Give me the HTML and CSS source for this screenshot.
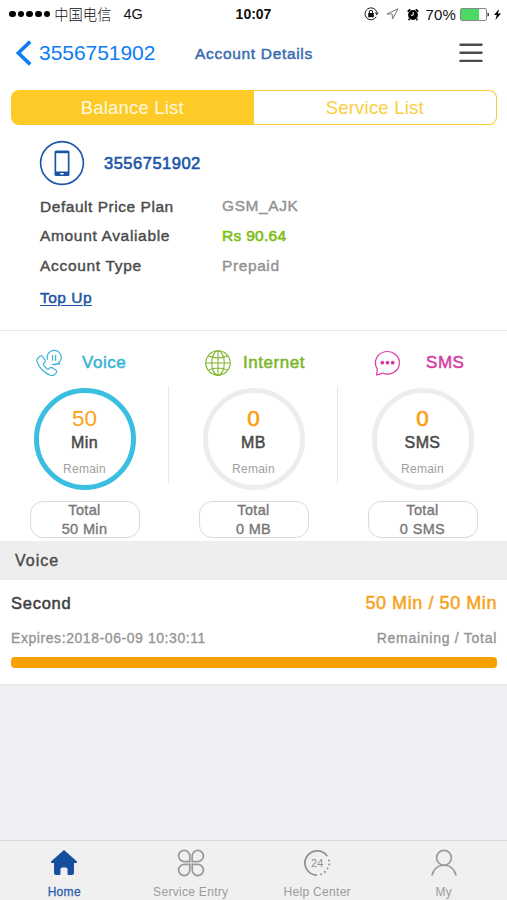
FILE: index.html
```html
<!DOCTYPE html>
<html lang="en">
<head>
<meta charset="utf-8">
<title>Account Details</title>
<link rel="stylesheet" href="styles.css">
</head>
<body>
<div class="app">
  <header class="status">
    <div class="status-left">
      <span class="signal"><i></i><i></i><i></i><i></i><i></i></span>
      <span class="carrier">中国电信</span>
      <span class="network">4G</span>
    </div>
    <span class="clock">10:07</span>
    <div class="status-right">
      <svg class="lock" width="15" height="14" viewBox="0 0 15 14"><path d="M12.2 9.800A6 6 0 1 1 12.700 5" fill="none" stroke="#222" stroke-width="1"/><path d="M10.800 5.600h3.800l-1.900 2.600z" fill="#222"/><rect x="4.200" y="6" width="5.600" height="4.200" fill="#111"/><path d="M5.300 6V5a1.700 1.700 0 0 1 3.400 0v1" fill="none" stroke="#111" stroke-width="1"/></svg>
      <svg class="location" width="13" height="12" viewBox="0 0 13 12"><path d="M12 .8 1 6h5.200l.3 5z" fill="none" stroke="#777" stroke-width="1" stroke-linejoin="round"/></svg>
      <svg class="alarm" width="12" height="13" viewBox="0 0 12 13"><circle cx="6" cy="7" r="4.900"/><path d="M.7 3.700 3.300 1.300M11.300 3.700 8.700 1.300M2.600 11l-1 1M9.400 11l1 1" stroke="#000" stroke-width="1.800"/><path d="M6.200 4v3.200H3.800" fill="none" stroke="#fff" stroke-width="1"/></svg>
      <span class="percent">70%</span>
      <svg class="battery" width="31" height="13" viewBox="0 0 31 13"><rect x=".5" y=".5" width="26" height="12" rx="1.500" fill="#fff" stroke="#888"/><rect x="1" y="1" width="18" height="11" fill="#4cd964"/><path d="M27.500 4.200q3.500 2.300 0 4.600z" fill="#333"/></svg>
      <svg class="bolt" width="7" height="11" viewBox="0 0 7 11"><path d="M5 0 0 6h2.800L1.400 11 7 4.600H4z"/></svg>
    </div>
  </header>

  <nav class="nav">
    <a class="back"><svg width="16" height="26" viewBox="0 0 16 26"><path d="M14.200 1.600 2.300 13l11.900 11.400" fill="none" stroke="#0d7cf5" stroke-width="3.600"/></svg><span>3556751902</span></a>
    <h1 class="title">Account Details</h1>
    <svg class="menu" width="24" height="20" viewBox="0 0 24 20"><path d="M1.500 1.700h21M1.500 9.800h21M1.500 17.900h21" stroke="#4c4c4c" stroke-width="2.400" stroke-linecap="round"/></svg>
  </nav>

  <div class="segment">
    <span class="seg active">Balance List</span>
    <span class="seg">Service List</span>
  </div>

  <section class="account">
    <div class="number-row">
      <svg width="46" height="46" viewBox="0 0 46 46"><circle cx="23" cy="23" r="21.400" fill="none" stroke="#1c55a5" stroke-width="1.600"/><rect x="15.500" y="10.500" width="15" height="25.500" rx="1.500" fill="#1c55a5"/><rect x="17.200" y="13.200" width="11.600" height="18.300" fill="#fff"/><rect x="21.200" y="33" width="3.600" height="1.600" rx=".8" fill="#fff"/></svg>
      <strong class="number">3556751902</strong>
    </div>
    <div class="row plan"><span class="label l1">Default Price Plan</span><span class="value v1">GSM_AJK</span></div>
    <div class="row amount"><span class="label l2">Amount Avaliable</span><span class="value v2">Rs 90.64</span></div>
    <div class="row type"><span class="label l3">Account Type</span><span class="value v3">Prepaid</span></div>
    <div class="row top"><a class="topup">Top Up</a></div>
  </section>

  <section class="usage">
    <article class="meter voice">
      <h2 class="heading"><svg width="28" height="28" viewBox="0 0 28 28" fill="none" stroke="#36b4d2" stroke-width="1.150" stroke-linejoin="round" stroke-linecap="round"><path d="M2.700 9.200 5.300 7q1.200-.7 2.100.4l2.700 3.800q.7 1.200-.3 2.100l-1.300 1.200q-.5.800.1 1.700 1.600 2.200 3.700 3.700.9.500 1.600-.1l1.300-1.100q1-.7 2.100 0l3.800 2.700q1.200 1 .3 2.200l-1.900 2.100q-1.700 1.300-4.100.6C9.700 24 4.500 19 2.200 13.300q-.8-2.600.500-4.100z"/><path d="M12.300 10.300a7.100 7.100 0 1 1 5.200 5.100M20 14.900q2.100.2 4.600.1-.7-.9-.8-2.100"/><path d="M17.600 6.300v5M20.600 6.300v5"/></svg><span>Voice</span></h2>
      <div class="ring"><span class="amount-left">50</span><span class="unit">Min</span><span class="remain">Remain</span></div>
      <div class="total"><span>Total</span><span>50 Min</span></div>
    </article>
    <article class="meter internet">
      <h2 class="heading"><svg width="28" height="28" viewBox="0 0 28 28" fill="none" stroke="#7bb52a" stroke-width="1.100"><circle cx="14" cy="14" r="12.200"/><ellipse cx="14" cy="14" rx="6.300" ry="12.200"/><path d="M14 1.800v24.400M1.800 14h24.400M4.200 6.800q9.800 4.400 19.600 0M4.200 21.200q9.800-4.400 19.600 0"/></svg><span>Internet</span></h2>
      <div class="ring"><span class="amount-left">0</span><span class="unit">MB</span><span class="remain">Remain</span></div>
      <div class="total"><span>Total</span><span>0 MB</span></div>
    </article>
    <article class="meter sms">
      <h2 class="heading"><svg width="28" height="28" viewBox="0 0 28 28" fill="none" stroke="#d93aa5" stroke-width="1.200" stroke-linejoin="round"><path d="M4.100 19.600A12 11.300 0 1 1 9.200 24Q6.500 25.700 3.400 26 4.600 22.600 4.100 19.600z"/><g fill="#d93aa5" stroke="none"><circle cx="9.300" cy="13.700" r="1.900"/><circle cx="14.500" cy="13.700" r="1.900"/><circle cx="19.700" cy="13.700" r="1.900"/></g></svg><span>SMS</span></h2>
      <div class="ring"><span class="amount-left">0</span><span class="unit">SMS</span><span class="remain">Remain</span></div>
      <div class="total"><span>Total</span><span>0 SMS</span></div>
    </article>
  </section>

  <h3 class="group">Voice</h3>
  <section class="detail">
    <div class="line main"><span class="name">Second</span><span class="quota">50 Min / 50 Min</span></div>
    <div class="line sub"><span class="expires">Expires:2018-06-09 10:30:11</span><span class="legend">Remaining / Total</span></div>
    <div class="bar"></div>
  </section>

  <footer class="tabs">
    <a class="tab on"><svg width="28" height="28" viewBox="0 0 28 28"><path d="M14 1 27 12.600Q27.600 14 26 14H24v10q0 2-2 2h-3.300q-1.200 0-1.200-1.200V20q0-1.500-1.500-1.500h-4q-1.500 0-1.500 1.500v4.800q0 1.200-1.200 1.200H6q-2 0-2-2V14H2Q.4 14 1 12.600z" fill="#164f9f"/></svg><span>Home</span></a>
    <a class="tab entry"><svg width="28" height="28" viewBox="0 0 28 28" fill="none" stroke="#999" stroke-width="1.700"><path d="M12.800 12.600H7.200A5.600 5.600 0 1 1 12.800 7z"/><path d="M15.200 12.600h5.600A5.600 5.600 0 1 0 15.200 7zM12.800 15.400H7.200A5.600 5.600 0 1 0 12.800 21zM15.200 15.400h5.600A5.600 5.600 0 1 1 15.200 21z"/></svg><span>Service Entry</span></a>
    <a class="tab help"><svg width="28" height="28" viewBox="0 0 28 28"><path d="M24.300 7.200A12.200 12.200 0 1 0 14 26.200" fill="none" stroke="#919191" stroke-width="1.800"/><path d="M26 11.500v.1M26.200 15.500v.1M24.600 19.500v.1M21.800 22.800v.1M18 25.200v.1" stroke="#919191" stroke-width="2" stroke-linecap="round"/><text x="14.200" y="18" text-anchor="middle" class="hours">24</text></svg><span>Help Center</span></a>
    <a class="tab my"><svg width="28" height="28" viewBox="0 0 28 28" fill="none" stroke="#999" stroke-width="1.600"><circle cx="14" cy="8.800" r="7.400"/><path d="M1.900 26.500C3.500 20 8 16.200 14 16.200S24.500 20 26.100 26.500"/></svg><span>My</span></a>
  </footer>
</div>
</body>
</html>
```
FILE: styles.css
```css
* { box-sizing: border-box; margin: 0; padding: 0; }
body { font-family: "Liberation Sans", "Noto Sans CJK SC", sans-serif; background: #efeff4; color: #4a4a4a; }
.app { width: 507px; height: 900px; display: flex; flex-direction: column; overflow: hidden; background: #efeff4; white-space: nowrap; }
h1, h2, h3, strong { font-weight: 400; }
svg { display: block; flex: none; }

.status { height: 28px; display: grid; grid-template-columns: 1fr auto 1fr; align-items: center; padding: 0 6px 0 9px; background: #fff; color: #111; }
.status-left, .status-right { display: flex; align-items: center; }
.signal { display: flex; gap: 2.200px; margin-right: 4px; }
.signal i { width: 6.500px; height: 6.500px; border-radius: 50%; background: #000; }
.carrier { font: 14.300px/20px "Noto Sans CJK SC", sans-serif; font-weight: 300; }
.network { font-size: 14.500px; margin-left: 12px; }
.clock { font-size: 14px; font-weight: 700; margin-right: 3px; }
.status-right { justify-content: flex-end; }
.location { margin-left: 7px; }
.alarm { margin-left: 8px; }
.percent { font-size: 15px; letter-spacing: .15px; margin: 0 4px 0 7px; }
.bolt { margin-left: 3px; }

.nav { height: 62px; display: grid; grid-template-columns: 195px 1fr 48px; align-items: center; padding-bottom: 13px; background: #fff; }
.back { display: flex; align-items: center; gap: 7px; padding-left: 16px; color: #0d7cf5; font-size: 21px; letter-spacing: -.05px; }
.title { font-size: 15.500px; color: #3a6cb0; -webkit-text-stroke: .5px; letter-spacing: .68px; padding-top: 3px; }

.segment { height: 49px; display: flex; padding: 0 10px 14px 11px; background: #fff; }
.seg { flex: 1; display: grid; place-items: center; font-size: 18.500px; color: #fbce3e; border: 1.500px solid #fbcb30; border-left: 0; border-radius: 0 8px 8px 0; letter-spacing: .2px; }
.seg.active { background: #fdca28; color: #fff9df; border: 0; border-radius: 8px 0 0 8px; }

.account { height: 192px; padding: 1px 0 0 39px; background: #fff; border-bottom: 1px solid #e6e6e6; font-size: 15.500px; -webkit-text-stroke: .4px; }
.number-row { display: flex; align-items: center; gap: 19px; height: 46px; color: #1c55a5; }
.number { font-size: 16.500px; letter-spacing: .5px; -webkit-text-stroke: .6px; }
.row { display: grid; grid-template-columns: 182px 1fr; padding-left: 1px; align-items: center; height: 30px; }
.plan { margin-top: 6px; height: 29px; }
.amount { height: 29px; }
.type { height: 31px; }
.top { height: 33px; }
.l1 { letter-spacing: .54px; }
.l2 { letter-spacing: .66px; }
.l3 { letter-spacing: .68px; }
.value { color: #929292; letter-spacing: .6px; }
.v1 { position: relative; top: -1px; }
.v2 { color: #80bd16; letter-spacing: .3px; -webkit-text-stroke: .6px; }
.topup { color: #1c55a5; text-decoration: underline; text-decoration-thickness: 1px; text-underline-offset: 2px; letter-spacing: .5px; -webkit-text-stroke: .5px; }

.usage { height: 210px; display: grid; grid-template-columns: repeat(3, 169px); background: #fff; }
.meter { display: flex; flex-direction: column; align-items: center; background: linear-gradient(#e9e9e9, #e9e9e9) right 55px / 1px 98px no-repeat; }
.sms { background: none; }
.heading { height: 57px; width: 169px; padding: 18px 0 0 35px; display: flex; align-items: flex-start; font-size: 17px; line-height: 20px; letter-spacing: .55px; -webkit-text-stroke: .5px; }
.heading svg { -webkit-text-stroke: 0; }
.heading span { padding-top: 4px; }
.voice .heading { color: #36b4d2; gap: 19px; }
.internet .heading { color: #7bb52a; gap: 11px; }
.sms .heading { color: #d93aa5; gap: 25px; }
.ring { width: 102px; height: 102px; border: 5px solid #ededed; border-radius: 50%; display: flex; flex-direction: column; align-items: center; padding-top: 12px; }
.voice .ring { border-color: #3abfe0; }
.amount-left { font-size: 22.500px; line-height: 27px; color: #faa11a; }
.internet .amount-left, .sms .amount-left { -webkit-text-stroke: .7px; }
.unit { font-size: 16px; line-height: 21px; letter-spacing: .4px; -webkit-text-stroke: .5px; }
.remain { font-size: 12px; line-height: 16px; margin-top: 8px; color: #a0a0a0; letter-spacing: .25px; }
.total { width: 110px; height: 37px; margin-top: 11px; border: 1px solid #dadada; border-radius: 13px; display: flex; flex-direction: column; align-items: center; font-size: 14.500px; line-height: 18.500px; color: #777; letter-spacing: .35px; -webkit-text-stroke: .35px; }
.total span { position: relative; top: -1px; }

.group { height: 39px; line-height: 40px; padding-left: 15px; background: #eee; font-size: 16px; letter-spacing: 1px; -webkit-text-stroke: .4px; }
.detail { height: 105px; padding: 11px 10px 0 11px; background: #fff; border-bottom: 1px solid #e8e8ea; }
.line { display: flex; justify-content: space-between; align-items: center; }
.main { height: 24px; font-size: 16.500px; -webkit-text-stroke: .5px; color: #404040; }
.name { letter-spacing: .75px; }
.quota { font-size: 18px; letter-spacing: .57px; color: #f7a31a; }
.sub { height: 18px; margin-top: 14px; font-size: 14px; color: #959595; -webkit-text-stroke: .35px; }
.expires { letter-spacing: .57px; }
.legend { letter-spacing: .73px; }
.bar { height: 11px; margin-top: 10px; border-radius: 4px; background: #f7a000; }

.tabs { margin-top: auto; height: 60px; display: grid; grid-template-columns: repeat(4, 126.500px); background: #f0f0f0; border-top: 1px solid #d9d9dc; }
.tab { display: flex; flex-direction: column; align-items: center; padding: 8px 0 0 2px; font-size: 12px; line-height: 16px; color: #9b9b9b; letter-spacing: .3px; }
.tab span { margin-top: 7px; }
.on { color: #2c61ac; -webkit-text-stroke: .3px; }
.hours { font-size: 11px; fill: #919191; letter-spacing: .2px; }
```
